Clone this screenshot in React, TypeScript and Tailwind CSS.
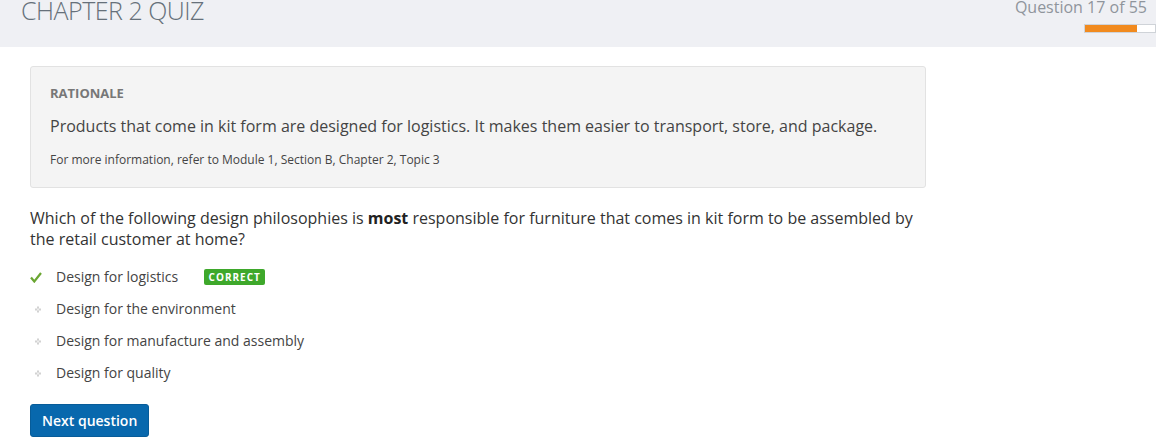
const options = [
  { label: 'Design for logistics', correct: true },
  { label: 'Design for the environment', correct: false },
  { label: 'Design for manufacture and assembly', correct: false },
  { label: 'Design for quality', correct: false },
];

function CheckMark() {
  return (
    <svg width="12" height="11" viewBox="0 0 12 11" className="shrink-0">
      <path d="M1 5.5 L4.3 9.5 L11 1" fill="none" stroke="#6aa632" strokeWidth="2.2" />
    </svg>
  );
}

function Bullet() {
  return (
    <svg width="12" height="7" viewBox="0 0 12 7" className="shrink-0">
      <path d="M5 1 L7 1 L7 3 L9 3 L9 5 L7 5 L7 7 L5 7 L5 5 L3 5 L3 3 L5 3 Z" transform="translate(0 -0.5)" fill="#d2d2d2" />
      <rect x="5" y="2.5" width="2" height="2" fill="#eeeeee" />
    </svg>
  );
}

export default function App() {
  return (
    <div className="min-h-screen bg-white" style={{ fontFamily: '"Open Sans", "Liberation Sans", sans-serif' }}>
      <header className="h-[47px] bg-[#eff0f4] flex justify-between">
        <h1 className="pl-[21px] text-[25px] font-light leading-[21px] text-[#66707a] tracking-[-0.5px]">
          CHAPTER 2 QUIZ
        </h1>
        <div className="flex flex-col items-end">
          <div className="pr-[9px] text-[16px] leading-[14px] text-[#8f959c]">Question 17 of 55</div>
          <div className="mt-[10px] w-[72px] h-[9px] border border-[#cfd3d8] bg-white">
            <div className="h-full w-[52px] bg-[#f18a1e]" />
          </div>
        </div>
      </header>

      <main className="w-[896px] ml-[30px]">
        <section className="mt-[19px] rounded-[3px] border border-[#e2e2e2] bg-[#f4f4f4] px-[19px] pt-[17px] pb-[18px]">
          <div className="text-[13px] leading-[18px] font-bold text-[#777]">RATIONALE</div>
          <p className="mt-[13px] text-[16px] leading-[22px] text-[#444]">
            Products that come in kit form are designed for logistics. It makes them easier to transport, store, and package.
          </p>
          <p className="mt-[14px] text-[12px] leading-[18px] text-[#444]">
            For more information, refer to Module 1, Section B, Chapter 2, Topic 3
          </p>
        </section>

        <p className="mt-[20px] text-[16px] leading-[21px] text-[#333]">
          Which of the following design philosophies is <b className="font-bold text-[#222]">most</b> responsible for furniture that comes in kit form to be assembled by the retail customer at home?
        </p>

        <ul className="mt-[17px] flex flex-col gap-[12px]">
          {options.map((o) => (
            <li key={o.label} className="flex items-center h-[20px] text-[14px] leading-[20px] text-[#444]">
              <span className="w-[26px] flex items-center">
                {o.correct ? <CheckMark /> : <span className="pl-[2px] flex"><Bullet /></span>}
              </span>
              <span>{o.label}</span>
              {o.correct && (
                <span className="ml-[26px] h-[16px] w-[61px] rounded-[2px] bg-[#3ea82b] text-white text-[10px] font-bold tracking-[1px] leading-[16px] text-center">
                  CORRECT
                </span>
              )}
            </li>
          ))}
        </ul>

        <button className="mt-[21px] h-[33px] rounded-[3px] border border-[#075c99] bg-[#0868ad] px-[11px] text-[14px] font-semibold text-white">
          Next question
        </button>
      </main>
    </div>
  );
}
